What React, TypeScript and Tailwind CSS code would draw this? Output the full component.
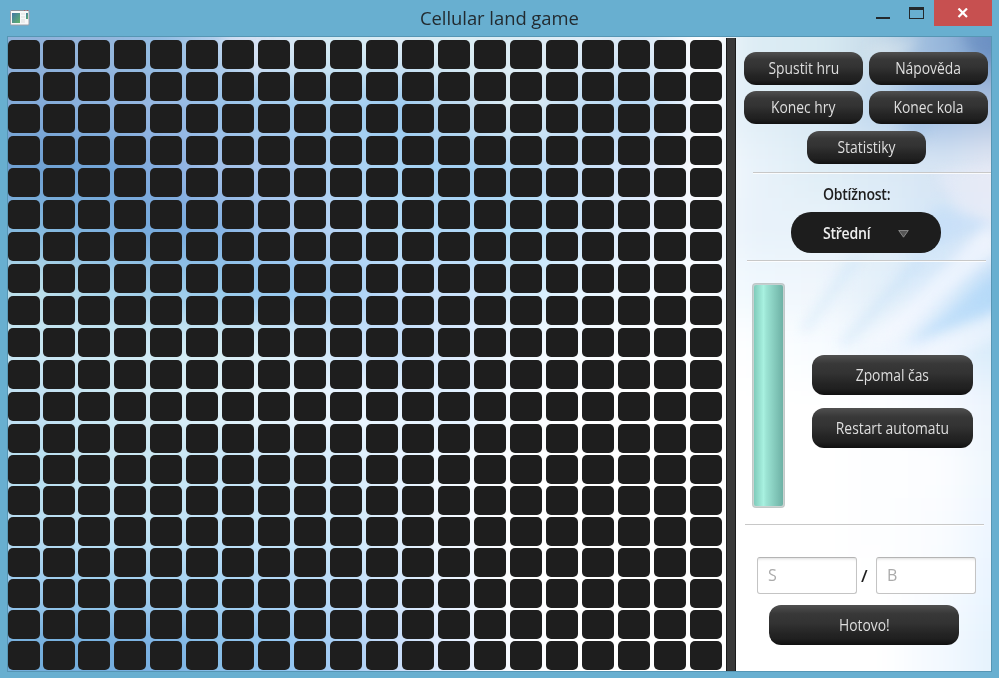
import React from "react";

const SKY: string[] = [
  "90b2da 96b6dc 92bce2 b4cfec d8e6f4 d6ecf4 dcebf4 dceef4 dcecf4 e0ecf6 d8e8f6 fafcff dcecf4 d8eaf2 c8dcea 98b8dc 7094c4",
  "82aad8 8cb2de 98b8e2 96c0e8 a0caec a6d0f0 98c8ee bcd8ee e0eef4 c0dcf2 b0d4f2 f0f6ff e0eef6 d8e8f4 c0d8ee a4c0e4 b0c4e0",
  "6e9fd2 70a4d6 84ace0 a4c0e8 a8c6ec aad0f2 a8d4f4 a0cef2 b0d6f4 c8e0f8 d4e4fa fcfcff e8f2fa e0eef6 dceaf6 d8e6f4 e4e8f4",
  "82b8de 7cb0de 74a8dc 82b0e2 a8c8ee b8d4f4 b4dcf6 aed6f6 b0def8 cce6fa e4eefc f8faff e8f2fa e8f2fa e0eef8 d4e6f8 e0eaf8",
  "bcdfea a8d4ea 9ccbe8 94c8ea 90c4ee a0ccf2 c0dcfa c8e0fa cce8fa e4f4ff f0f8ff f8fcff f0f8fe f0f6fc e4f0fa d8eafb c4e0f9",
  "c8e6f2 cce8f2 d0eaf4 d8eef4 dceff8 cfe6fa c4defa dceafc f0f8ff f8fcff fcfeff ffffff fcfeff f8fcff f0f7fe e8f2fe d8ecfa",
  "c0dff2 c8e6f2 d4ebf4 e0f2f8 e8f4fb eff7ff e8f4fe e0f0ff f8fcff ffffff ffffff ffffff ffffff ffffff fdfeff f8faff ecf4fd",
  "b8dff0 c8e6f2 c8e6f2 c4e4f6 cce6f8 d4ebfa e4f2ff f4faff ffffff ffffff ffffff ffffff ffffff ffffff fdfeff fcfdff eef6fd",
  "b8dcf0 c0e2f4 c4e4f4 c0e2f8 c8e6f8 cce8fa e0effc f4f9ff ffffff ffffff ffffff ffffff ffffff ffffff fdfeff fafcff ecf5ff",
  "9ccbee 9cceee a4d0f0 a8d4f4 b0d6f6 bcdcf8 d4e7fc ecf4ff ffffff ffffff ffffff ffffff ffffff ffffff ffffff f8fbff e8f4ff",
  "74aedc 74aede 7ab0e2 88bee8 90c4f0 a4ccf4 c8dcf8 e4eeff fafcff ffffff ffffff ffffff ffffff ffffff ffffff f4f9ff e4f2fd",
];

function SkyBackdrop() {
  const rows = SKY.map((r) => r.split(" "));
  return (
    <svg className="absolute inset-0 h-full w-full" viewBox="8 37 983 634" preserveAspectRatio="none">
      <defs>
        <filter id="soft" x="-5%" y="-5%" width="110%" height="110%" colorInterpolationFilters="sRGB">
          <feGaussianBlur stdDeviation="19" />
        </filter>
        <filter id="wisp" x="-20%" y="-20%" width="140%" height="140%" colorInterpolationFilters="sRGB">
          <feGaussianBlur stdDeviation="6" />
        </filter>
      </defs>
      <g filter="url(#soft)">
        {rows.map((row, j) =>
          row.map((c, i) => {
            const x = i === 0 ? -80 : 8 + 60 * i;
            const y = j === 0 ? -60 : 18 + 60 * j;
            const right = i === 16 ? 1120 : 69 + 60 * i;
            const bottom = j === 10 ? 780 : 79 + 60 * j;
            return <rect key={`${i}-${j}`} x={x} y={y} width={right - x} height={bottom - y} fill={`#${c}`} />;
          })
        )}
      </g>
      <g filter="url(#wisp)">
        <path d="M1005 306 L880 370 L900 380 L1005 335Z" fill="#fafbff" opacity=".45" />
        <path d="M1010 262 L905 345 L1010 306Z" fill="#a8d4f8" opacity=".55" />
        <path d="M990 222 L860 350 L895 340 L1000 250Z" fill="#f8f9ff" opacity=".65" />
        <path d="M915 258 L838 345 L848 345 L930 258Z" fill="#b8daf6" opacity=".4" />
        <path d="M850 258 L800 330 L808 332 L864 258Z" fill="#c4e2f8" opacity=".4" />
        <path d="M940 205 L900 250 L925 250 L995 225Z" fill="#b6d8f8" opacity=".4" />
        <path d="M935 172 L1005 165 L1005 225 L960 212Z" fill="#eeeef8" opacity=".45" />
        <path d="M900 90 L945 82 L950 96 L920 145 L900 132Z" fill="#94b8e2" opacity=".3" />
        <path d="M960 30 L1005 30 L1005 62 L975 56Z" fill="#6288be" opacity=".45" />
        <path d="M870 46 L920 40 L900 56 L865 60Z" fill="#e0eaf0" opacity=".5" />
        <path d="M222 30 L265 30 L265 75 L228 62Z" fill="#dde4f5" opacity=".6" />
        <path d="M690 30 L724 30 L724 200 L695 200Z" fill="#ffffff" opacity=".6" />
      </g>
    </svg>
  );
}

const glossy =
  "flex items-center justify-center rounded-[12px] bg-[linear-gradient(180deg,#505050_0%,#383838_22%,#333333_45%,#242424_72%,#202020_84%,#101010_100%)] text-[#dedede] font-['Open_Sans','Noto_Sans',sans-serif]";

function Btn({ label, size }: { label: string; size: string }) {
  return (
    <button className={`${glossy} ${size}`}>
      <span className="inline-block scale-x-[0.865] whitespace-nowrap text-[16px] leading-5">{label}</span>
    </button>
  );
}

function Rule({ place }: { place: string }) {
  return <div className={`h-[2px] shrink-0 border-t border-[#c8c8c8] bg-white/80 ${place}`} />;
}

function TitleBar() {
  return (
    <header className="flex h-[36px] shrink-0 items-start">
      <div className="w-[420px] pl-[10px] pt-[10px]">
        <svg width="20" height="16" viewBox="0 0 20 16">
          <defs>
            <linearGradient id="pane" x1="0" y1="0" x2="1" y2="1">
              <stop offset="0" stopColor="#4377a5" />
              <stop offset="1" stopColor="#62b46c" />
            </linearGradient>
          </defs>
          <rect x="0.5" y="0.5" width="18.5" height="14.5" rx="1" fill="#f8f8f8" stroke="#a0a0a8" />
          <path d="M1 .5h18" stroke="#8d929c" />
          <path d="M14 .5h1M17 .5h1" stroke="#b05f63" />
          <rect x="2" y="3" width="8" height="10" fill="url(#pane)" />
          <path d="M11 4h4M11 7h4M11 10h4M11 12h4" stroke="#dddddd" />
          <rect x="16" y="3" width="2" height="6" fill="url(#pane)" />
        </svg>
      </div>
      <h1 className="w-[200px] origin-left scale-x-[0.97] whitespace-nowrap pt-[6px] font-['Open_Sans','Noto_Sans',sans-serif] text-[19px] leading-6 tracking-[-0.05px] text-[#222b30]">
        Cellular land game
      </h1>
      <div className="ml-auto mr-[7px] flex h-[26px]">
        <svg width="58" height="26" viewBox="0 0 58 26" shapeRendering="crispEdges">
          <path d="M0 17h14v2H0z" fill="#23292d" />
          <path d="M33 7h15v12H33z M34 10v8h13v-8z" fill="#23292d" fillRule="evenodd" />
        </svg>
        <div className="flex w-[58px] items-center justify-center bg-[#c75050]">
          <svg width="12" height="10" viewBox="0 0 12 10" className="mr-[1px]">
            <path d="M1.5 .5 10 9M10 .5 1.5 9" stroke="#fff" strokeWidth="2.2" />
          </svg>
        </div>
      </div>
    </header>
  );
}

function Board() {
  return (
    <div className="grid w-[718px] shrink-0 content-start grid-cols-[35px_35px_repeat(18,36px)] grid-rows-[repeat(12,32px)_repeat(8,31px)] overflow-hidden pt-[3px]">
      {Array.from({ length: 400 }, (_, i) => (
        <div key={i} className="h-[29px] w-[32px] rounded-[5px] bg-[#1e1e1e]" />
      ))}
    </div>
  );
}

function RuleField({ hint }: { hint: string }) {
  return (
    <input
      placeholder={hint}
      className="h-[37px] w-[100px] rounded-[3px] border border-[#c4c4c4] border-t-[#b4b4b4] bg-white pb-[2px] pl-[10px] font-['Open_Sans','Noto_Sans',sans-serif] text-[16px] shadow-[inset_0_3px_3px_-2px_#dddddd] outline-none placeholder:text-[#aaaaaa]"
    />
  );
}

function Sidebar() {
  return (
    <aside className="flex w-[255px] flex-col pt-[15px] font-['Open_Sans','Noto_Sans',sans-serif]">
      <div className="ml-[8px] grid grid-cols-[119px_119px] gap-[6px]">
        <Btn label="Spustit hru" size="h-[33px] pb-[2px]" />
        <Btn label="Nápověda" size="h-[33px] pb-[2px]" />
        <Btn label="Konec hry" size="h-[33px] pb-[2px]" />
        <Btn label="Konec kola" size="h-[33px] pb-[2px]" />
      </div>
      <Btn label="Statistiky" size="ml-[71px] mt-[7px] h-[33px] w-[119px] pb-[2px]" />
      <Rule place="ml-[17px] mt-[8px]" />
      <div className="ml-[87px] mt-[10px] h-[20px] origin-left scale-x-[0.88] text-[16px] font-semibold leading-5 tracking-[-0.3px] text-[#1e1e1e]">
        Obtížnost:
      </div>
      <button className="ml-[55px] mt-[8px] flex h-[41px] w-[150px] shrink-0 items-center rounded-[20px] bg-[#1d1d1d] pl-[32px] pr-[32px] text-[#eeeeee]">
        <span className="origin-left scale-x-[0.88] text-[16px] font-semibold leading-5 tracking-[-0.3px]">Střední</span>
        <svg width="11" height="8" viewBox="0 0 11 8" className="ml-auto mt-[2px]">
          <path d="M.7.5h9.6L5.5 7.2z" fill="#555" stroke="#999" strokeWidth=".8" />
        </svg>
      </button>
      <Rule place="ml-[11px] mr-[5px] mt-[7px]" />
      <div className="mt-[21px] flex h-[225px] shrink-0">
        <div className="ml-[16px] h-full w-[33px] rounded-[4px] border border-[#b4b8b8]/40 bg-[#a9b5b3]/60 p-px">
          <div className="h-full rounded-[2px] bg-[linear-gradient(90deg,#80cbbb_0%,#a8f1e0_33%,#9ce4d4_42%,#6eb1a5_100%)]" />
        </div>
        <div className="ml-[27px] flex flex-col gap-[13px] pt-[72px]">
          <Btn label="Zpomal čas" size="h-[40px] w-[161px]" />
          <Btn label="Restart automatu" size="h-[40px] w-[161px]" />
        </div>
      </div>
      <Rule place="ml-[9px] mr-[7px] mt-[16px]" />
      <div className="ml-[21px] mt-[31px] flex items-center">
        <RuleField hint="S" />
        <span className="w-[19px] pl-[4px] text-[17px] font-semibold text-[#1e1e1e]">/</span>
        <RuleField hint="B" />
      </div>
      <Btn label="Hotovo!" size="ml-[33px] mt-[11px] h-[40px] w-[190px]" />
    </aside>
  );
}

export default function App() {
  return (
    <div className="flex h-[678px] w-[999px] flex-col overflow-hidden bg-[#68afd0]">
      <TitleBar />
      <main className="relative ml-[7px] h-[636px] w-[985px] overflow-hidden border border-[#5696b4]">
        <SkyBackdrop />
        <div className="relative flex h-full">
          <Board />
          <div className="mt-px w-[10px] shrink-0 border-x border-[#1b1b1b] bg-[#393939]" />
          <Sidebar />
        </div>
      </main>
    </div>
  );
}
